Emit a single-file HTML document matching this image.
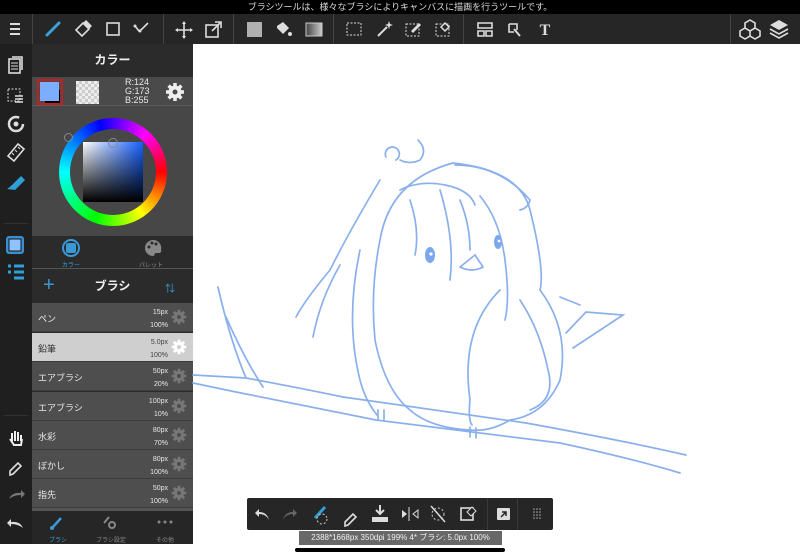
<!DOCTYPE html>
<html><head><meta charset="utf-8"><style>
*{margin:0;padding:0;box-sizing:border-box}
body{width:800px;height:558px;overflow:hidden;background:#fff;font-family:"Liberation Sans","Noto Sans CJK JP",sans-serif;position:relative}
.abs{position:absolute}
#status{left:0;top:0;width:800px;height:14px;background:#000;color:#ddd;font-size:9px;text-align:center;line-height:14px}
#tb{left:0;top:14px;width:800px;height:30px;background:#262626}
#side{left:0;top:44px;width:32px;height:500px;background:#1f1f1f;overflow:hidden}
#panel{left:32px;top:44px;width:161px;height:500px;background:#2c2c2c}
.row{position:absolute;left:0;width:161px;height:29px;background:#4e4e4e;border-bottom:1px solid #3c3c3c;color:#e8e8e8;font-size:9px}
.row .n{position:absolute;left:6px;top:9px}
.row .s{position:absolute;right:25px;top:3px;font-size:7px;text-align:right;line-height:13px}
.row .g{position:absolute;right:6px;top:6px;width:16px;height:16px}
.sel{background:#cfcfcf;color:#333}
.w{fill:none;stroke:#ddd;stroke-width:1.6}
</style></head><body>
<div id="status" class="abs">ブラシツールは、様々なブラシによりキャンバスに描画を行うツールです。</div>
<div id="tb" class="abs">
<svg width="800" height="30" viewBox="0 14 800 30" style="position:absolute;left:0;top:0">
<g stroke="#ddd" stroke-width="2" fill="none">
<path d="M10 24h10M10 29h10M10 34h10"/>
</g>
<g fill="#444"><rect x="32" y="14" width="1" height="30"/><rect x="163" y="14" width="1" height="30"/><rect x="233" y="14" width="1" height="30"/><rect x="333" y="14" width="1" height="30"/><rect x="463" y="14" width="1" height="30"/><rect x="730" y="14" width="1" height="30"/></g>
<path d="M47 35l12-12" stroke="#3aa0d8" stroke-width="3" stroke-linecap="round"/>
<path d="M76 30l7-7 6 6-7 7z" fill="none" stroke="#ddd" stroke-width="1.6"/><path d="M83 23l6 6 3-3-6-6z" fill="#ddd"/>
<rect x="107" y="23" width="12" height="12" class="w"/>
<path d="M135 26l4 5 3-2 6-6" class="w"/><circle cx="135" cy="26" r="1.5" fill="#ddd"/><circle cx="140" cy="31" r="1.5" fill="#ddd"/>
<path d="M184 22v16M176 30h16" class="w"/><path d="M184 21l-2 3h4zM184 39l-2-3h4zM175 30l3-2v4zM193 30l-3-2v4z" fill="#ddd"/>
<rect x="206" y="25" width="12" height="12" class="w"/><path d="M212 31l8-8M215 22h6v6" class="w"/>
<rect x="247" y="22" width="15" height="15" fill="#b0b0b0"/>
<path d="M277 26l6-4 6 6-6 6-6-6z" fill="#ddd"/><circle cx="290" cy="34" r="2" fill="#ddd"/>
<defs><linearGradient id="gr"><stop offset="0" stop-color="#444"/><stop offset="1" stop-color="#ccc"/></linearGradient></defs>
<rect x="306" y="23" width="16" height="13" fill="url(#gr)" stroke="#ccc"/>
<rect x="347" y="23" width="14" height="12" fill="none" stroke="#ddd" stroke-dasharray="2 1.5"/>
<path d="M378 36l9-9" stroke="#ddd" stroke-width="2"/><path d="M389 21l1 3 3 1-3 1-1 3-1-3-3-1 3-1z" fill="#ddd"/>
<rect x="406" y="24" width="13" height="12" fill="none" stroke="#ddd" stroke-dasharray="2 1.5"/><path d="M411 31l8-8 2 2-8 8z" fill="#ddd"/>
<rect x="436" y="24" width="13" height="12" fill="none" stroke="#ddd" stroke-dasharray="2 1.5"/><path d="M441 27l4-4 4 4-4 4z" fill="none" stroke="#ddd" stroke-width="1.5"/>
<path d="M478 23h14v5h-14zM478 31h6v5h-6zM486 31h6v5h-6z" class="w"/>
<path d="M509 24h8v6M509 24v8h5" class="w"/><path d="M514 29l6 7" stroke="#ddd" stroke-width="2"/>
<text x="545" y="35" fill="#ddd" font-family="Liberation Serif" font-weight="bold" font-size="16" text-anchor="middle">T</text>
<path d="M750 20l5 3v5l-5 3-5-3v-5zM745 28l5 3v5l-5 3-5-3v-5zM755 28l5 3v5l-5 3-5-3v-5z" class="w" stroke-width="1.2"/>
<path d="M779 20l9 5-9 5-9-5z" fill="#ddd"/><path d="M770 29l9 5 9-5M770 33l9 5 9-5" class="w" stroke-width="1.8"/>
</svg></div>

<div id="side" class="abs">
<svg width="32" height="514" viewBox="0 44 32 514">
<rect x="9" y="59" width="11" height="14" class="w"/><path d="M12 57h10v13" class="w"/><path d="M11 63h7M11 66h7M11 69h7" stroke="#ddd"/>
<rect x="8" y="89" width="12" height="12" fill="none" stroke="#ddd" stroke-dasharray="2 1.5"/><path d="M15 96h8M15 99h8M15 102h8" stroke="#ddd" stroke-width="1.5"/>
<circle cx="16" cy="124" r="7" fill="none" stroke="#ddd" stroke-width="2.5" stroke-dasharray="36 8"/><circle cx="16" cy="124" r="2.5" fill="#ddd"/>
<path d="M8 156l10-12 6 5-10 12z" class="w"/><path d="M12 153l2 2M15 150l2 2M18 147l2 2" stroke="#ddd"/>
<path d="M7 189l4-3 10-10 4 4-10 10z" fill="#2f9fd6"/>
<rect x="4" y="223" width="24" height="1" fill="#333"/>
<rect x="6" y="236" width="18" height="18" rx="3" fill="#3a8fd0"/><rect x="9" y="239" width="12" height="12" fill="#8fc2ff" stroke="#111"/>
<path d="M8 266h3M14 266h10M14 272h10M14 278h10M8 272h3" stroke="#2f9fd6" stroke-width="3"/>
<rect x="4" y="415" width="24" height="1" fill="#333"/>
<path d="M12 441v-8M15 441v-10M18 441v-9M21 441v-6M10 439l4 6h7l1-6" stroke="#eee" stroke-width="2" fill="none"/>
<path d="M10 471l8-8 3 3-8 8-3 1z" class="w"/>
<path d="M9 499q3-7 12-6v-3l4 4-4 4v-3q-7 0-12 4z" fill="#777"/>
<path d="M23 528q-3-7-12-6v-3l-4 4 4 4v-3q7 0 12 4z" fill="#ddd"/>
</svg></div>

<div id="panel" class="abs">
<div class="abs" style="left:0;top:0;width:161px;height:33px;background:#2b2b2b;color:#eee;font-size:12px;font-weight:bold;text-align:center;line-height:33px">カラー</div>
<div class="abs" style="left:0;top:33px;width:161px;height:29px;background:#4a4a4a;border-bottom:1px solid #5a5a5a"></div>
<div class="abs" style="left:5px;top:35px;width:26px;height:26px;border:2px solid #c02020;background:#4a4a4a"></div>
<div class="abs" style="left:13px;top:46px;width:15px;height:13px;background:#000"></div>
<div class="abs" style="left:8px;top:38px;width:19px;height:19px;background:#7cadff"></div>
<div class="abs" style="left:44px;top:37px;width:23px;height:23px;background:#eee;background-image:linear-gradient(45deg,#ccc 25%,transparent 25%,transparent 75%,#ccc 75%),linear-gradient(45deg,#ccc 25%,transparent 25%,transparent 75%,#ccc 75%);background-size:6px 6px;background-position:0 0,3px 3px"></div>
<div class="abs" style="left:93px;top:34px;color:#e8e8e8;font-size:9px;line-height:9px">R:124<br>G:173<br>B:255</div>
<svg class="abs" style="left:133px;top:38px" width="20" height="20" viewBox="0 0 20 20"><g fill="#eee"><circle cx="10" cy="10" r="6.5"/><g stroke="#eee" stroke-width="3.5"><path d="M10 1v18M1 10h18M3.6 3.6l12.8 12.8M16.4 3.6L3.6 16.4"/></g></g><circle cx="10" cy="10" r="2.5" fill="#4a4a4a"/></svg>
<div class="abs" style="left:0;top:62px;width:161px;height:130px;background:#474747"></div>
<div class="abs" style="left:27px;top:74px;width:108px;height:108px;border-radius:50%;background:conic-gradient(from 90deg,#f00,#ff0 55deg,#0f0 110deg,#0ff 180deg,#00f 255deg,#f0f 310deg,#f00 360deg)"></div>
<div class="abs" style="left:38px;top:85px;width:86px;height:86px;border-radius:50%;background:#474747"></div>
<div class="abs" style="left:51px;top:98px;width:60px;height:60px;background:linear-gradient(to bottom,transparent,#000),linear-gradient(to right,#fff,#1560ff)"></div>
<div class="abs" style="left:32px;top:89px;width:9px;height:9px;border:1.5px solid #888;border-radius:50%"></div>
<div class="abs" style="left:76px;top:94px;width:10px;height:10px;border:1.5px solid #888;border-radius:50%"></div>
<div class="abs" style="left:0;top:192px;width:161px;height:33px;background:#2b2b2b;border-bottom:1px solid #555"></div>
<svg class="abs" style="left:29px;top:194px" width="20" height="20"><circle cx="10" cy="10" r="8" fill="none" stroke="#3a9ad8" stroke-width="2"/><rect x="5" y="5" width="10" height="10" rx="2" fill="#3a9ad8"/></svg>
<svg class="abs" style="left:111px;top:194px" width="20" height="20"><path d="M10 2a8 8 0 1 0 0 16c2 0 1-3 3-3h3a2 2 0 0 0 2-3A8 8 0 0 0 10 2z" fill="#888"/><circle cx="6" cy="9" r="1.5" fill="#2b2b2b"/><circle cx="9" cy="5" r="1.5" fill="#2b2b2b"/><circle cx="13" cy="6" r="1.5" fill="#2b2b2b"/></svg>
<div class="abs" style="left:30px;top:216px;color:#3a9ad8;font-size:6px">カラー</div>
<div class="abs" style="left:107px;top:216px;color:#888;font-size:6px">パレット</div>
<div class="abs" style="left:0;top:226px;width:161px;height:33px;background:#2b2b2b;color:#eee;font-size:12px;font-weight:bold;text-align:center;line-height:33px">ブラシ</div>
<div class="abs" style="left:11px;top:230px;color:#3a9ad8;font-size:20px;font-weight:300">+</div>
<div class="abs" style="left:133px;top:236px;color:#3a9ad8;font-size:10px">⇅</div>
<div class="row" style="top:259px"><span class="n">ペン</span><span class="s">15px<br>100%</span><svg class="g" viewBox="0 0 20 20"><circle cx="10" cy="10" r="6.5" fill="#777"/><path d="M10 1v18M1 10h18M3.6 3.6l12.8 12.8M16.4 3.6L3.6 16.4" stroke="#777" stroke-width="3.5"/><circle cx="10" cy="10" r="2.5" fill="#4e4e4e"/></svg></div>
<div class="row sel" style="top:289px"><span class="n">鉛筆</span><span class="s" style="color:#444">5.0px<br>100%</span><svg class="g" viewBox="0 0 20 20"><circle cx="10" cy="10" r="6.5" fill="#fff"/><path d="M10 1v18M1 10h18M3.6 3.6l12.8 12.8M16.4 3.6L3.6 16.4" stroke="#fff" stroke-width="3.5"/><circle cx="10" cy="10" r="2.5" fill="#cfcfcf"/></svg></div>
<div class="row" style="top:318px"><span class="n">エアブラシ</span><span class="s">50px<br>20%</span><svg class="g" viewBox="0 0 20 20"><circle cx="10" cy="10" r="6.5" fill="#777"/><path d="M10 1v18M1 10h18M3.6 3.6l12.8 12.8M16.4 3.6L3.6 16.4" stroke="#777" stroke-width="3.5"/><circle cx="10" cy="10" r="2.5" fill="#4e4e4e"/></svg></div>
<div class="row" style="top:348px"><span class="n">エアブラシ</span><span class="s">100px<br>10%</span><svg class="g" viewBox="0 0 20 20"><circle cx="10" cy="10" r="6.5" fill="#777"/><path d="M10 1v18M1 10h18M3.6 3.6l12.8 12.8M16.4 3.6L3.6 16.4" stroke="#777" stroke-width="3.5"/><circle cx="10" cy="10" r="2.5" fill="#4e4e4e"/></svg></div>
<div class="row" style="top:377px"><span class="n">水彩</span><span class="s">80px<br>70%</span><svg class="g" viewBox="0 0 20 20"><circle cx="10" cy="10" r="6.5" fill="#777"/><path d="M10 1v18M1 10h18M3.6 3.6l12.8 12.8M16.4 3.6L3.6 16.4" stroke="#777" stroke-width="3.5"/><circle cx="10" cy="10" r="2.5" fill="#4e4e4e"/></svg></div>
<div class="row" style="top:406px"><span class="n">ぼかし</span><span class="s">80px<br>100%</span><svg class="g" viewBox="0 0 20 20"><circle cx="10" cy="10" r="6.5" fill="#777"/><path d="M10 1v18M1 10h18M3.6 3.6l12.8 12.8M16.4 3.6L3.6 16.4" stroke="#777" stroke-width="3.5"/><circle cx="10" cy="10" r="2.5" fill="#4e4e4e"/></svg></div>
<div class="row" style="top:435px"><span class="n">指先</span><span class="s">50px<br>100%</span><svg class="g" viewBox="0 0 20 20"><circle cx="10" cy="10" r="6.5" fill="#777"/><path d="M10 1v18M1 10h18M3.6 3.6l12.8 12.8M16.4 3.6L3.6 16.4" stroke="#777" stroke-width="3.5"/><circle cx="10" cy="10" r="2.5" fill="#4e4e4e"/></svg></div>
<div class="abs" style="left:0;top:464px;width:161px;height:3px;background:#555"></div>
<div class="abs" style="left:0;top:467px;width:161px;height:33px;background:#262626"></div>
<svg class="abs" style="left:0;top:467px" width="161" height="33"><path d="M21 16l8-9" stroke="#3a9ad8" stroke-width="2.5"/><circle cx="20" cy="17" r="2" fill="#3a9ad8"/><path d="M72 12l5-6" stroke="#888" stroke-width="2"/><circle cx="80" cy="14" r="3" fill="none" stroke="#888" stroke-width="2"/><circle cx="127" cy="11" r="1.5" fill="#888"/><circle cx="133" cy="11" r="1.5" fill="#888"/><circle cx="139" cy="11" r="1.5" fill="#888"/></svg>
<div class="abs" style="left:17px;top:491px;color:#3a9ad8;font-size:6px">ブラシ</div>
<div class="abs" style="left:64px;top:491px;color:#888;font-size:6px">ブラシ設定</div>
<div class="abs" style="left:124px;top:491px;color:#888;font-size:6px">その他</div>
</div>

<svg class="abs" style="left:0;top:0" width="800" height="558">
<g fill="none" stroke="#8ab0ec" stroke-width="1.7" stroke-linecap="round">
<path d="M193 375L246 378Q300 388 343 397L526 423Q620 440 686 455"/>
<path d="M193 383L236 392Q300 405 376 420L560 443Q630 458 680 473"/>
<path d="M218 287Q230 340 246 378"/><path d="M226 317Q245 360 263 387"/>
<path d="M380 240Q390 180 453 163Q520 170 530 210Q545 270 540 290Q570 330 560 380Q545 415 510 420Q490 432 470 430Q430 428 410 410Q385 390 375 340Q370 290 380 240"/>
<path d="M380 180Q350 230 330 270Q305 300 296 317M340 265Q320 300 313 337M360 250Q345 320 360 380Q365 400 377 415"/>
<path d="M400 190Q420 180 445 185Q470 190 475 205M440 190Q455 240 450 280M410 200Q420 230 415 255M480 196Q500 220 505 260Q510 300 505 320M460 200Q470 225 470 250"/>
<path d="M455 165Q500 165 530 200Q528 208 520 210"/>
<path d="M500 290Q460 330 470 400Q468 420 472 425"/>
<path d="M520 300Q540 330 548 370Q556 400 530 410"/>
<path d="M566 333L586 312L623 315L573 348M560 297L580 305"/>
<path d="M386 157a7 7 0 1 1 10 3M418 140Q428 150 420 160Q410 165 400 160"/>
<path d="M460 267L475 255L483 267Q472 273 460 267"/>
<path d="M378 410v10M384 410v10M470 427v10M476 428v10"/>
</g>
<g fill="#7ba8ec"><ellipse cx="430" cy="255" rx="5" ry="8"/><ellipse cx="498" cy="242" rx="4" ry="7"/></g>
<g fill="#fff"><circle cx="431" cy="254" r="1.6"/><circle cx="499" cy="241" r="1.4"/></g>
</svg>

<div class="abs" style="left:247px;top:498px;width:306px;height:32px;background:#262626;border-radius:2px"></div>
<svg class="abs" style="left:247px;top:498px" width="306" height="32" viewBox="247 498 306 32">
<path d="M269 520q-3-6-10-6v3l-4-4 4-4v3q8 0 10 8z" fill="#ddd"/>
<path d="M283 520q3-6 10-6v3l4-4-4-4v3q-8 0-10 8z" fill="#666"/>
<path d="M315 518l10-11" stroke="#2f9fd6" stroke-width="3"/><circle cx="322" cy="519" r="5" fill="none" stroke="#ccc" stroke-dasharray="2 2"/>
<path d="M345 522l8-8 3 3-8 8-3 1z" class="w"/>
<path d="M380 505v8M376 510l4 4 4-4" stroke="#ddd" stroke-width="2" fill="none"/><rect x="372" y="517" width="16" height="5" fill="#ddd"/>
<path d="M402 510l5 4-5 4z" fill="#ddd"/><path d="M409 507v14" stroke="#ddd"/><path d="M418 510l-5 4 5 4z" fill="none" stroke="#ddd"/>
<circle cx="438" cy="514" r="6" fill="none" stroke="#ccc" stroke-dasharray="2 2"/><path d="M431 506l14 16" stroke="#ddd" stroke-width="1.5"/>
<rect x="461" y="508" width="12" height="12" class="w"/><path d="M467 512l5-5 4 4-5 5z" fill="#262626" stroke="#ddd"/>
<rect x="487" y="498" width="1" height="32" fill="#3a3a3a"/><rect x="517" y="498" width="1" height="32" fill="#3a3a3a"/>
<rect x="497" y="508" width="13" height="12" fill="#ddd" rx="1"/><path d="M501 517l5-5M502 512h4v4" stroke="#262626" stroke-width="1.5" fill="none"/>
<g fill="#aaa"><circle cx="534" cy="509" r=".8"/><circle cx="537" cy="509" r=".8"/><circle cx="540" cy="509" r=".8"/><circle cx="534" cy="512" r=".8"/><circle cx="537" cy="512" r=".8"/><circle cx="540" cy="512" r=".8"/><circle cx="534" cy="515" r=".8"/><circle cx="537" cy="515" r=".8"/><circle cx="540" cy="515" r=".8"/><circle cx="534" cy="518" r=".8"/><circle cx="537" cy="518" r=".8"/><circle cx="540" cy="518" r=".8"/></g>
</svg>
<div class="abs" style="left:299px;top:531px;width:203px;height:14px;background:#686868;color:#f0f0f0;font-size:8px;line-height:14px;text-align:center;white-space:nowrap">2388*1668px 350dpi 199% 4* ブラシ: 5.0px 100%</div>
<div class="abs" style="left:295px;top:548px;width:210px;height:4px;background:#000;border-radius:2px"></div>
</body></html>
